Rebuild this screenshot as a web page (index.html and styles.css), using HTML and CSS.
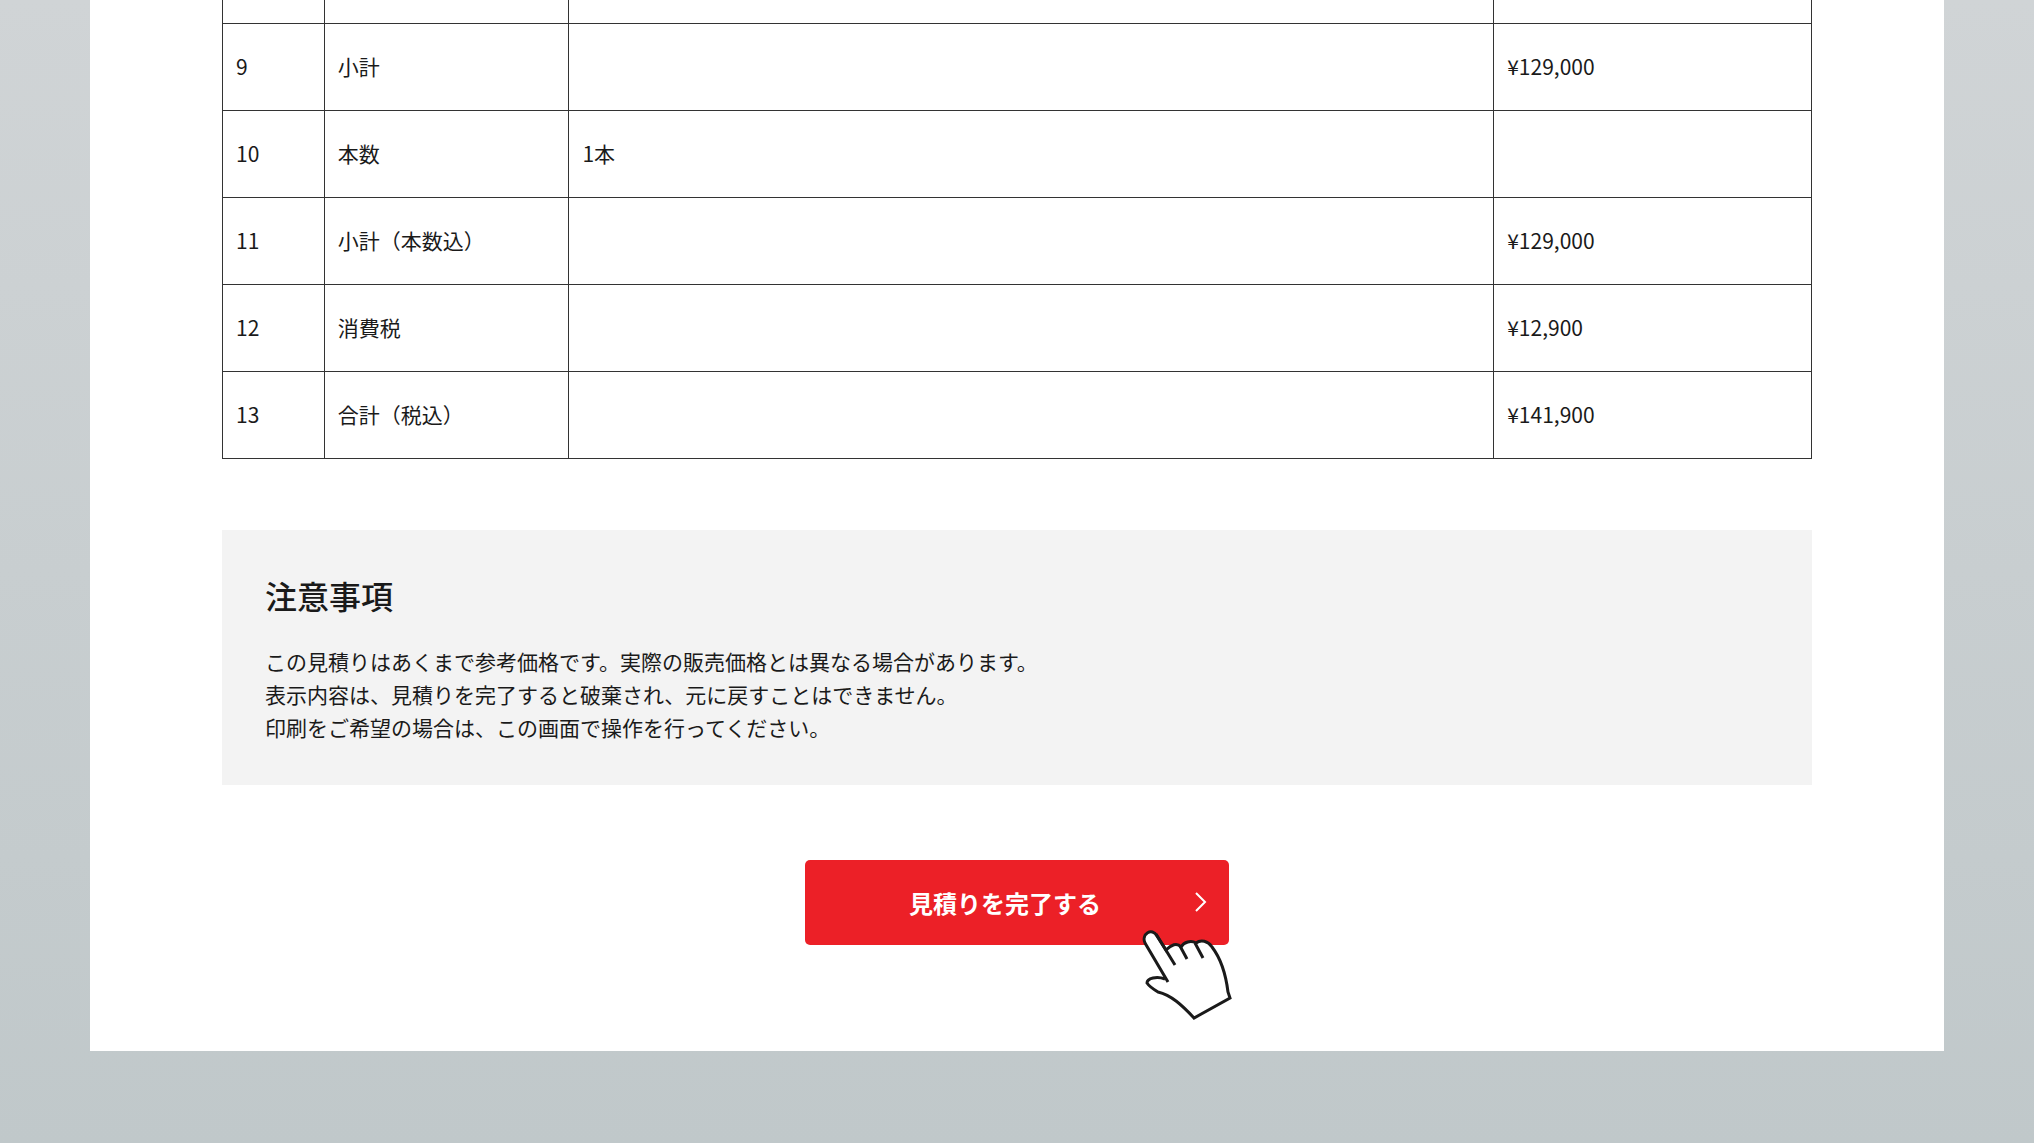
FILE: index.html
```html
<!DOCTYPE html>
<html lang="ja">
<head>
  <meta charset="UTF-8">
  <meta name="viewport" content="width=device-width, initial-scale=1.0">
  <title>お見積り</title>
  <link rel="stylesheet" href="styles.css">
</head>
<body>
  <main class="page">
    <table class="estimate">
      <colgroup>
        <col class="col-no">
        <col class="col-item">
        <col class="col-detail">
        <col class="col-price">
      </colgroup>
      <tbody>
        <tr class="cut"><td></td><td></td><td></td><td></td></tr>
        <tr><td>9</td><td>小計</td><td></td><td>¥129,000</td></tr>
        <tr><td>10</td><td>本数</td><td>1本</td><td></td></tr>
        <tr><td>11</td><td>小計（本数込）</td><td></td><td>¥129,000</td></tr>
        <tr><td>12</td><td>消費税</td><td></td><td>¥12,900</td></tr>
        <tr><td>13</td><td>合計（税込）</td><td></td><td>¥141,900</td></tr>
      </tbody>
    </table>

    <section class="notice">
      <h2>注意事項</h2>
      <p>この見積りはあくまで参考価格です。実際の販売価格とは異なる場合があります。<br>
      表示内容は、見積りを完了すると破棄され、元に戻すことはできません。<br>
      印刷をご希望の場合は、この画面で操作を行ってください。</p>
    </section>

    <div class="action">
      <button type="button" class="finish">
        見積りを完了する
        <svg class="arrow" width="14" height="22" viewBox="0 0 14 22" aria-hidden="true">
          <path d="M2 2l9 9-9 9" fill="none" stroke="currentColor" stroke-width="2"/>
        </svg>
      </button>
      <svg class="hand" width="150" height="140" viewBox="0 0 150 140" aria-hidden="true">
        <path d="M58 82L35 43C31 34 42 27 47 36L56 50C61 45 67 42 71 47C74 42 81 40 86 43C91 39 98 41 102 47C112 60 116 76 118 92L120 98L84 118C72 105 61 95 48 92C43 89 39 86 37 83C37 78 47 76 55 79" fill="#fff" stroke="#1a1a1a" stroke-width="3"/>
        <path d="M46 34l19 31M70 46l7 13M85 43l8 15" fill="none" stroke="#1a1a1a" stroke-width="3"/>
      </svg>
    </div>
  </main>
</body>
</html>
```

FILE: styles.css
```css
* {
  box-sizing: border-box;
}
body {
  margin: 0;
  min-height: 100vh;
  padding: 0 90px 92px;
  background: linear-gradient(#d0d4d6, #c0c8ca);
  color: #1a1a1a;
  font-family: "Noto Sans CJK JP", sans-serif;
  font-size: 21px;
  line-height: 33px;
}
.page {
  background-color: #fff;
  padding: 0 132px 106px;
}
.estimate {
  width: 100%;
  table-layout: fixed;
  border-collapse: collapse;
}
.col-no {
  width: 6.4%;
}
.col-item {
  width: 15.4%;
}
.col-detail {
  width: 58.2%;
}
.estimate td {
  height: 87px;
  padding: 0 13px;
  border: 1px solid #333;
}
.estimate .cut td {
  height: 23px;
  border-top: none;
}
.notice {
  margin-top: 71px;
  padding: 41px 43px;
  background-color: #f3f3f3;
}
.notice h2 {
  margin: 0 0 26px;
  font-family: "Noto Sans CJK JP Medium", "Noto Sans CJK JP", sans-serif;
  font-size: 32px;
  font-weight: 500;
  line-height: 48px;
}
.notice p {
  margin: 0;
}
.action {
  position: relative;
  width: 424px;
  margin: 75px auto 0;
}
.finish {
  display: flex;
  align-items: center;
  justify-content: center;
  position: relative;
  width: 100%;
  height: 85px;
  padding: 0 84px 0 60px;
  border: none;
  border-radius: 5px;
  background-color: #ec2027;
  color: #fff;
  font-family: inherit;
  font-size: 24px;
  font-weight: 700;
  cursor: pointer;
}
.arrow {
  position: absolute;
  right: 21px;
}
.hand {
  position: absolute;
  left: 305px;
  top: 40px;
  pointer-events: none;
}
```
